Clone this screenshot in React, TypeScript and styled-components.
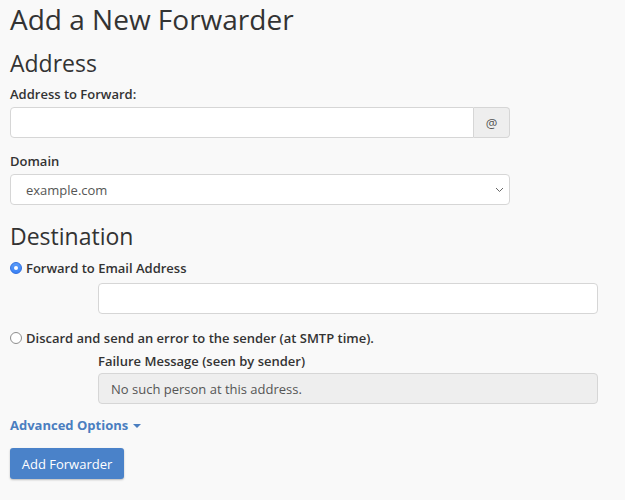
import React, { useState } from 'react';
import styled, { createGlobalStyle } from 'styled-components';

const colors = {
  page: '#f9f9f9',
  text: '#333333',
  border: '#d6d6d6',
  addon: '#eeeeee',
  link: '#4a7ec0',
  button: '#4a82c9',
  radio: '#3b82f6',
};

const GlobalStyle = createGlobalStyle`
  html, body {
    margin: 0;
    padding: 0;
    background: ${colors.page};
  }
  body {
    font-family: 'Open Sans', 'Noto Sans', sans-serif;
    color: ${colors.text};
  }
`;

const Page = styled.form`
  width: 625px;
  height: 500px;
  box-sizing: border-box;
  padding: 0 10px;
  overflow: hidden;
`;

const Title = styled.h1`
  margin: 0;
  font-size: 28px;
  line-height: 38px;
  font-weight: 400;
`;

const SectionTitle = styled.h2<{ $top: number }>`
  margin: ${({ $top }) => $top}px 0 0;
  font-size: 23px;
  line-height: 29px;
  font-weight: 400;
`;

const Label = styled.label<{ $top: number }>`
  display: block;
  margin-top: ${({ $top }) => $top}px;
  font-size: 13px;
  line-height: 18px;
  font-weight: 600;
`;

const Group = styled.div<{ $top: number; $indent?: number; $width: number }>`
  display: flex;
  margin-top: ${({ $top }) => $top}px;
  margin-left: ${({ $indent }) => $indent || 0}px;
  width: ${({ $width }) => $width}px;
  position: relative;
`;

const TextInput = styled.input<{ $joined?: boolean }>`
  flex: 1;
  min-width: 0;
  height: 31px;
  box-sizing: border-box;
  border: 1px solid ${colors.border};
  border-radius: ${({ $joined }) => ($joined ? '4px 0 0 4px' : '4px')};
  background: #fff;
  padding: 0 12px;
  font-family: inherit;
  font-size: 13px;
  color: #555;
  outline: none;

  &:disabled {
    background: ${colors.addon};
    color: #555;
  }
`;

const Addon = styled.span`
  width: 36px;
  height: 31px;
  box-sizing: border-box;
  display: flex;
  align-items: center;
  justify-content: center;
  border: 1px solid ${colors.border};
  border-left: none;
  border-radius: 0 4px 4px 0;
  background: ${colors.addon};
  font-size: 13px;
  color: #555;
`;

const Select = styled.select`
  flex: 1;
  height: 31px;
  box-sizing: border-box;
  appearance: none;
  border: 1px solid ${colors.border};
  border-radius: 4px;
  background: #fff;
  padding: 0 15px;
  font-family: inherit;
  font-size: 13px;
  color: #555;
  outline: none;
`;

const Chevron = styled.svg`
  position: absolute;
  right: 6px;
  top: 13px;
  pointer-events: none;
`;

const RadioRow = styled.label<{ $top: number }>`
  display: flex;
  align-items: center;
  gap: 4px;
  margin-top: ${({ $top }) => $top}px;
  font-size: 13px;
  line-height: 18px;
  font-weight: 600;
  cursor: pointer;
`;

const Radio = styled.input`
  appearance: none;
  margin: 0;
  width: 12px;
  height: 12px;
  border-radius: 50%;
  border: 1px solid #8e8e8e;
  background: #fff;
  box-sizing: border-box;
  display: grid;
  place-items: center;

  &:checked {
    border-color: #2f6fe0;
    background: linear-gradient(#5a9bf8, ${colors.radio});
  }
  &:checked::after {
    content: '';
    width: 4px;
    height: 4px;
    border-radius: 50%;
    background: #fff;
  }
`;

const Indented = styled.div`
  margin-left: 88px;
`;

const AdvancedLink = styled.a`
  display: inline-flex;
  align-items: center;
  gap: 5px;
  margin-top: 12px;
  font-size: 13px;
  line-height: 18px;
  font-weight: 700;
  color: ${colors.link};
  text-decoration: none;
  cursor: pointer;
`;

const Caret = styled.span`
  width: 0;
  height: 0;
  border-left: 4px solid transparent;
  border-right: 4px solid transparent;
  border-top: 4px solid ${colors.link};
  margin-top: 1px;
`;

const Actions = styled.div`
  margin-top: 13px;
`;

const Button = styled.button`
  height: 31px;
  width: 114px;
  border: none;
  border-radius: 3px;
  background: ${colors.button};
  color: #fff;
  font-family: inherit;
  font-size: 13px;
  box-shadow: 0 1px 2px rgba(0, 0, 0, 0.25);
  cursor: pointer;
`;

export default function App() {
  const [mode, setMode] = useState<'forward' | 'fail'>('forward');

  return (
    <>
      <GlobalStyle />
      <Page onSubmit={(e) => e.preventDefault()}>
        <Title>Add a New Forwarder</Title>

        <SectionTitle $top={11}>Address</SectionTitle>
        <Label $top={7} htmlFor="email">Address to Forward:</Label>
        <Group $top={4} $width={500}>
          <TextInput id="email" $joined />
          <Addon>@</Addon>
        </Group>

        <Label $top={14} htmlFor="domain">Domain</Label>
        <Group $top={4} $width={500}>
          <Select id="domain" defaultValue="example.com">
            <option>example.com</option>
          </Select>
          <Chevron width="9" height="6" viewBox="0 0 9 6">
            <path d="M1 1l3.5 3.5L8 1" fill="none" stroke="#666" strokeWidth="1" />
          </Chevron>
        </Group>

        <SectionTitle $top={17}>Destination</SectionTitle>
        <RadioRow $top={8}>
          <Radio
            type="radio"
            name="mode"
            checked={mode === 'forward'}
            onChange={() => setMode('forward')}
          />
          Forward to Email Address
        </RadioRow>
        <Group $top={6} $indent={88} $width={500}>
          <TextInput />
        </Group>

        <RadioRow $top={15}>
          <Radio
            type="radio"
            name="mode"
            checked={mode === 'fail'}
            onChange={() => setMode('fail')}
          />
          Discard and send an error to the sender (at SMTP time).
        </RadioRow>
        <Indented>
          <Label $top={5}>Failure Message (seen by sender)</Label>
        </Indented>
        <Group $top={3} $indent={88} $width={500}>
          <TextInput disabled defaultValue="No such person at this address." />
        </Group>

        <AdvancedLink>
          Advanced Options
          <Caret />
        </AdvancedLink>

        <Actions>
          <Button type="submit">Add Forwarder</Button>
        </Actions>
      </Page>
    </>
  );
}
